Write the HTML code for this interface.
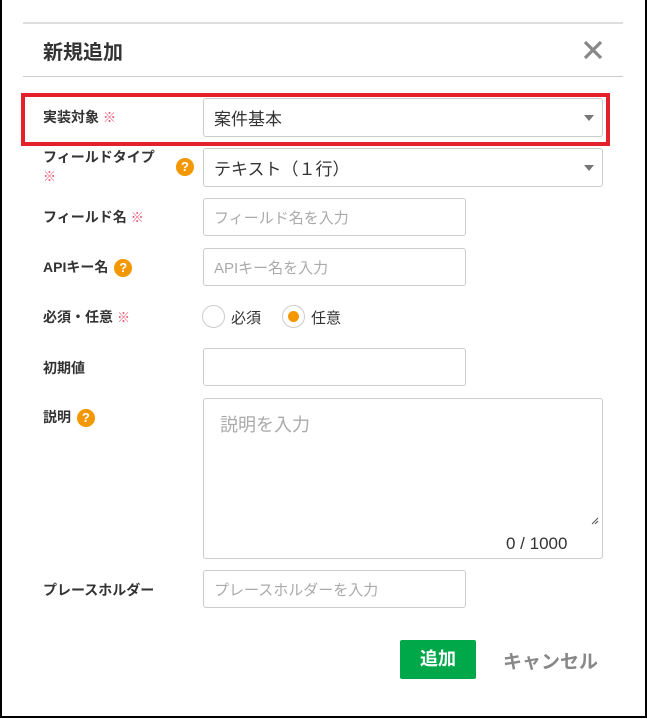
<!DOCTYPE html>
<html><head><meta charset="utf-8"><style>
*{box-sizing:border-box;margin:0;padding:0}
body{width:647px;height:719px;background:#fff;font-family:"Liberation Sans","Noto Sans CJK JP",sans-serif;position:relative;overflow:hidden}
.abs{position:absolute}
.frame{left:0;top:0;width:647px;height:718px;border:2px solid #000;border-top:none}
.lbl{position:absolute;left:43px;font-size:14px;font-weight:bold;color:#333}
.req{color:#e8506e;font-weight:normal;font-size:13px;margin-left:4px}
.q{display:inline-block;width:18px;height:18px;border-radius:50%;background:#f39800;color:#fff;font-size:13px;font-weight:bold;text-align:center;line-height:18px;vertical-align:middle;margin-left:2px}
.box{position:absolute;border:1px solid #ccc;border-radius:3px;background:#fff;font-size:15px;color:#aaa;padding-left:10px;display:flex;align-items:center}
.sel{color:#333;font-size:17px;padding-left:10px}
.arr{position:absolute;right:8px;top:50%;margin-top:-3px;border-left:5px solid transparent;border-right:5px solid transparent;border-top:6px solid #777}
.rad{position:absolute;width:22px;height:22px;border:1px solid #ccc;border-radius:50%;background:#fff}
</style></head><body>
<div class="abs frame"></div>
<div class="abs" style="left:23px;top:22px;width:600px;height:2px;background:#ddd"></div>
<div class="abs" style="left:43px;top:36px;font-size:20px;font-weight:bold;color:#333">新規追加</div>
<svg class="abs" style="left:583px;top:40px" width="20" height="20"><path d="M2 2L18 18M18 2L2 18" stroke="#888" stroke-width="3.2"/></svg>
<div class="abs" style="left:23px;top:76px;width:600px;height:1px;background:#ccc"></div>
<div class="abs" style="left:21px;top:93px;width:589px;height:53px;border:4px solid #e4202b"></div>
<div class="lbl" style="top:107px">実装対象<span class="req">※</span></div>
<div class="box sel" style="left:203px;top:98px;width:400px;height:39px">案件基本<span class="arr"></span></div>
<div class="lbl" style="top:148px;line-height:19px">フィールドタイプ<br><span class="req" style="margin:0">※</span></div>
<span class="q abs" style="left:174px;top:158px">?</span>
<div class="box sel" style="left:203px;top:148px;width:400px;height:39px">テキスト（１行）<span class="arr"></span></div>
<div class="lbl" style="top:207px">フィールド名<span class="req">※</span></div>
<div class="box" style="left:203px;top:198px;width:263px;height:38px">フィールド名を入力</div>
<div class="lbl" style="top:257px">APIキー名 <span class="q">?</span></div>
<div class="box" style="left:203px;top:248px;width:263px;height:38px">APIキー名を入力</div>
<div class="lbl" style="top:307px">必須・任意<span class="req">※</span></div>
<div class="rad" style="left:202px;top:305px;width:23px;height:23px"></div>
<div class="abs" style="left:231px;top:307px;font-size:15px;color:#333">必須</div>
<div class="rad" style="left:282px;top:305px;width:23px;height:23px"><div style="position:absolute;left:5px;top:5px;width:11px;height:11px;border-radius:50%;background:#f39800"></div></div>
<div class="abs" style="left:311px;top:307px;font-size:15px;color:#333">任意</div>
<div class="lbl" style="top:358px">初期値</div>
<div class="box" style="left:203px;top:348px;width:263px;height:38px"></div>
<div class="lbl" style="top:407px">説明 <span class="q">?</span></div>
<div class="box" style="left:203px;top:398px;width:400px;height:161px;align-items:flex-start;padding:12px 0 0 16px;font-size:18px">説明を入力</div>
<svg class="abs" style="left:591px;top:517px" width="8" height="8"><path d="M7 1L1 7M7 4L4 7" stroke="#555" stroke-width="1"/></svg>
<div class="abs" style="left:506px;top:534px;font-size:17px;color:#333">0 / 1000</div>
<div class="lbl" style="top:580px">プレースホルダー</div>
<div class="box" style="left:203px;top:570px;width:263px;height:38px">プレースホルダーを入力</div>
<div class="abs" style="left:400px;top:640px;width:76px;height:39px;background:#00a84a;border-radius:2px;color:#fff;font-size:18px;font-weight:bold;text-align:center;line-height:39px">追加</div>
<div class="abs" style="left:503px;top:647px;font-size:19px;font-weight:bold;color:#888">キャンセル</div>
</body></html>
